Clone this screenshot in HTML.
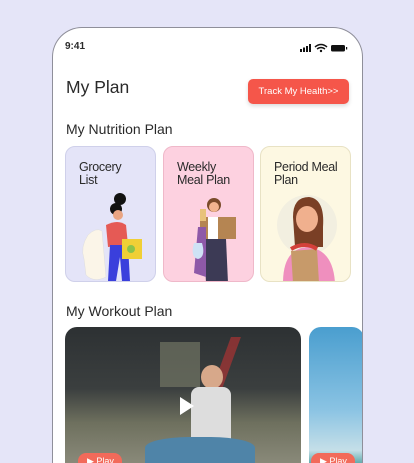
<!DOCTYPE html>
<html><head><meta charset="utf-8"><style>
*{margin:0;padding:0;box-sizing:border-box}
html,body{width:414px;height:463px;overflow:hidden}
body{background:#e5e5f8;font-family:"Liberation Sans",sans-serif;color:#2a2a2a}
.wrap{position:relative;width:414px;height:463px;overflow:hidden;background:#e5e5f8}
.phone{position:absolute;left:52px;top:27px;width:311px;height:436px;background:#fff;border:1px solid #8f8f9a;border-bottom:none;border-radius:30px 30px 0 0;overflow:hidden}
.t{position:absolute;white-space:nowrap}
.card{position:absolute;top:118px;width:91px;height:136px;border-radius:10px;border:1px solid;overflow:hidden}
.card .l{position:absolute;left:13px;top:14px;font-size:12.5px;line-height:13px;color:#2a2a2a;letter-spacing:-0.3px}
.vid{position:absolute;top:299px;height:137px;border-radius:12px 12px 0 0;overflow:hidden}
.play{position:absolute;top:126px;width:44px;height:11px;border-radius:8px 8px 0 0;background:#f26a5a;color:#fff;font-size:9px;line-height:9px;padding:4px 0 0 9px;overflow:hidden}
</style></head><body><div class="wrap">
<div class="phone">
 <div class="t" style="left:12px;top:13px;font-size:10px;font-weight:bold">9:41</div>
 <svg class="t" style="left:247px;top:15px" width="50" height="10">
  <rect x="0" y="6" width="2" height="3" fill="#111"/><rect x="3" y="4.5" width="2" height="4.5" fill="#111"/><rect x="6" y="3" width="2" height="6" fill="#111"/><rect x="9" y="1" width="2" height="8" fill="#111"/>
  <path d="M15 4 Q21 -1 27 4 M17 6 Q21 3 25 6" stroke="#111" stroke-width="1.5" fill="none"/><circle cx="21" cy="8" r="1.2" fill="#111"/>
  <rect x="31" y="2" width="14" height="6.5" rx="1.5" fill="#111"/><rect x="46" y="4" width="1.2" height="2.5" fill="#111"/>
 </svg>
 <div class="t" style="left:13px;top:49px;font-size:17.5px">My Plan</div>
 <div class="t" style="left:195px;top:51px;width:101px;height:25px;background:#f5564a;border-radius:5px;color:#fff;font-size:9.5px;padding-top:7px;text-align:center;box-shadow:0 2px 4px rgba(0,0,0,.15)">Track My Health&gt;&gt;</div>
 <div class="t" style="left:13px;top:93px;font-size:14px">My Nutrition Plan</div>
 <div class="card" style="left:12px;background:#e4e4f8;border-color:#cfd0ea"><div class="l">Grocery<br>List</div>
  <svg style="position:absolute;left:0;top:40px" width="90" height="94">
   <path d="M18 72 Q14 60 22 48 Q30 40 36 44 L40 90 Q28 96 20 88Z" fill="#fbf5e8" stroke="#ddd" stroke-width=".5"/>
   <circle cx="54" cy="12" r="6" fill="#111"/><circle cx="50" cy="22" r="6" fill="#111"/><circle cx="52" cy="28" r="5" fill="#e9a583"/>
   <path d="M40 38 Q52 32 60 38 L62 58 L42 60Z" fill="#e55a55"/>
   <path d="M44 58 L62 58 L64 94 L56 94 L54 70 L50 94 L42 94Z" fill="#3a3fdc"/>
   <rect x="56" y="52" width="20" height="20" fill="#f0cf36"/><circle cx="65" cy="62" r="4" fill="#8bc34a"/>
  </svg></div>
 <div class="card" style="left:110px;background:#fdd1e0;border-color:#efb8c9"><div class="l">Weekly<br>Meal Plan</div>
  <svg style="position:absolute;left:0;top:40px" width="90" height="94">
   <circle cx="50" cy="18" r="7" fill="#7a4b2a"/><circle cx="50" cy="20" r="5" fill="#f2b58f"/>
   <rect x="36" y="30" width="36" height="22" fill="#b58552"/><rect x="44" y="30" width="10" height="30" fill="#fff"/>
   <path d="M40 52 L62 52 L64 96 L42 96Z" fill="#3c3a55"/><path d="M34 40 L42 40 L42 90 L30 86Z" fill="#8e59a8"/>
   <path d="M30 56 Q26 70 34 72 Q42 70 38 56Z" fill="#cfe2f5"/><rect x="36" y="22" width="6" height="12" fill="#e8c27a"/>
  </svg></div>
 <div class="card" style="left:207px;background:#fdf8e2;border-color:#e8e2c4"><div class="l">Period Meal<br>Plan</div>
  <svg style="position:absolute;left:0;top:40px" width="90" height="94">
   <circle cx="46" cy="38" r="30" fill="#f2efe0"/>
   <path d="M32 30 Q32 10 48 10 Q64 12 62 40 L62 60 L34 60Z" fill="#7a3f25"/>
   <ellipse cx="46" cy="32" rx="11" ry="13" fill="#f0b08e"/>
   <path d="M22 96 Q22 62 46 60 Q72 62 74 96Z" fill="#ef8fbe"/>
   <path d="M30 64 L56 62 L58 96 L32 96Z" fill="#c79a6a"/><path d="M30 62 Q44 54 56 62" stroke="#d3403a" stroke-width="4" fill="none"/>
  </svg></div>
 <div class="t" style="left:13px;top:275px;font-size:14px">My Workout Plan</div>
 <div class="vid" style="left:12px;width:236px;background:linear-gradient(180deg,#2d3133 0%,#3b3f3f 45%,#6e705e 70%,#8a8a7a 100%)">
  <div style="position:absolute;left:95px;top:15px;width:40px;height:45px;background:#7b7f6a;opacity:.6"></div>
  <div style="position:absolute;left:155px;top:10px;width:10px;height:60px;background:#a33;opacity:.7;transform:skewX(-20deg)"></div>
  <div style="position:absolute;left:136px;top:38px;width:22px;height:24px;border-radius:50%;background:#d7a88a"></div>
  <div style="position:absolute;left:126px;top:60px;width:40px;height:55px;border-radius:8px 8px 0 0;background:#ddd"></div>
  <div style="position:absolute;left:80px;top:110px;width:110px;height:27px;border-radius:40% 40% 0 0;background:#4f84a8"></div>
  <div style="position:absolute;left:115px;top:70px;width:0;height:0;border-left:14px solid #fff;border-top:9px solid transparent;border-bottom:9px solid transparent"></div>
  <div class="play" style="left:13px">▶ Play</div>
 </div>
 <div class="vid" style="left:256px;width:55px;background:linear-gradient(180deg,#4a9ecf 0%,#8ac3e3 60%,#c5dfe8 90%,#5aa7a8 100%)">
  <div class="play" style="left:2px">▶ Play</div>
 </div>
</div>
</div></body></html>
